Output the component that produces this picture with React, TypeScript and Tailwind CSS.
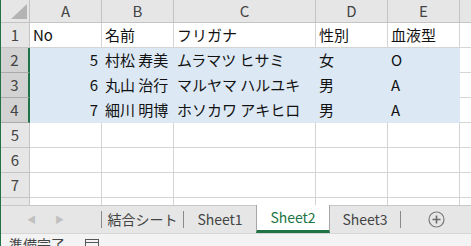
import React from 'react'

const font = { fontFamily: '"Noto Sans CJK JP", "Noto Sans", sans-serif' }

const cols = [
  { key: 'A', w: 'w-[72px]' },
  { key: 'B', w: 'w-[72px]' },
  { key: 'C', w: 'w-[142px]' },
  { key: 'D', w: 'w-[72px]' },
  { key: 'E', w: 'w-[72px]' },
]

const rows: (string | number)[][] = [
  ['No', '名前', 'フリガナ', '性別', '血液型'],
  [5, '村松 寿美', 'ムラマツ ヒサミ', '女', 'O'],
  [6, '丸山 治行', 'マルヤマ ハルユキ', '男', 'A'],
  [7, '細川 明博', 'ホソカワ アキヒロ', '男', 'A'],
  ['', '', '', '', ''],
  ['', '', '', '', ''],
  ['', '', '', '', ''],
  ['', '', '', '', ''],
]

const Cell = ({ value, w, selected }: { value: string | number; w: string; selected: boolean }) => {
  const numeric = typeof value === 'number'
  return (
    <div
      className={`${w} shrink-0 h-full border-r border-b flex items-center overflow-hidden whitespace-nowrap text-[15px] text-[#111] px-[3px] ${
        selected ? 'bg-[#dce8f4] border-[#dce8f4]' : 'bg-white border-[#d4d4d4]'
      } ${numeric ? 'justify-end' : 'justify-start'}`}
    >
      {value}
    </div>
  )
}

export default function App() {
  return (
    <div style={font} className="w-[471px] h-[246px] overflow-hidden bg-white border-l border-[#217346] flex flex-col">
      <div className="h-[205px] shrink-0 overflow-hidden flex flex-col">
        {/* column headers */}
        <div className="flex h-[23px] shrink-0">
          <div className="w-[29px] shrink-0 h-full bg-[#e6e6e6] border-r border-b border-[#c4c4c4] relative overflow-hidden">
            <svg width="29" height="23" className="absolute left-0 top-0">
              <polygon points="10,19 26,19 26,4" fill="#b4b4b4" />
            </svg>
          </div>
          {cols.map((c) => (
            <div
              key={c.key}
              className={`${c.w} shrink-0 h-full bg-[#e6e6e6] border-r border-b border-[#c4c4c4] flex items-center justify-center text-[15px] text-[#444]`}
            >
              {c.key}
            </div>
          ))}
          <div className="flex-1 h-full bg-[#e6e6e6] border-b border-[#c4c4c4]" />
        </div>

        {/* grid rows */}
        {rows.map((r, i) => {
          const sel = i >= 1 && i <= 3
          return (
            <div key={i} className="flex h-[25px] shrink-0">
              <div
                className={`w-[29px] shrink-0 h-full border-b flex items-center justify-center text-[15px] text-[#444] ${
                  sel
                    ? 'bg-[#d2d2d2] border-b-[#ababab] border-r-2 border-r-[#217346]'
                    : 'bg-[#e6e6e6] border-b-[#c4c4c4] border-r border-r-[#c4c4c4]'
                }`}
              >
                {i < 7 ? i + 1 : ''}
              </div>
              {r.map((v, j) => (
                <Cell key={j} value={v} w={cols[j].w} selected={sel} />
              ))}
              <div className="flex-1 h-full bg-white border-b border-[#d4d4d4]" />
            </div>
          )
        })}
      </div>

      {/* sheet tabs */}
      <div className="h-[28px] shrink-0 bg-[#e6e6e6] border-t border-[#c8c8c8] flex items-stretch text-[14px] text-[#444]">
        <div className="w-[100px] shrink-0 flex items-center">
          <span className="ml-[26px] text-[9px] text-[#c0c0c0]">◀</span>
          <span className="ml-[19px] text-[9px] text-[#c0c0c0]">▶</span>
        </div>
        <div className="w-px my-[5px] bg-[#8a8a8a]" />
        <div className="w-[81px] flex items-center justify-center">結合シート</div>
        <div className="w-px my-[5px] bg-[#8a8a8a]" />
        <div className="w-[72px] flex items-center justify-center">Sheet1</div>
        <div className="w-[74px] -mt-px bg-white border-x border-[#a6a6a6] border-b-[3px] border-b-[#217346] flex items-center justify-center text-[#217346]">
          Sheet2
        </div>
        <div className="w-[70px] flex items-center justify-center">Sheet3</div>
        <div className="w-px my-[5px] bg-[#8a8a8a]" />
        <div className="flex-1 flex items-center justify-center">
          <svg width="17" height="17" viewBox="0 0 17 17">
            <circle cx="8.5" cy="8.5" r="7.5" fill="none" stroke="#7a7a7a" strokeWidth="1.2" />
            <path d="M8.5 4.5v8M4.5 8.5h8" stroke="#6a6a6a" strokeWidth="1.6" />
          </svg>
        </div>
      </div>

      {/* status bar */}
      <div className="flex-1 bg-[#f3f3f3] border-t border-[#d6d6d6] overflow-hidden flex items-start text-[14px] text-[#444]">
        <span className="ml-[8px] mt-[3px] leading-none">準備完了</span>
        <svg width="16" height="14" className="ml-[19px] mt-[4px]">
          <rect x="1.5" y="1.5" width="13" height="12" fill="none" stroke="#555" />
          <path d="M1.5 4.5h13" stroke="#555" />
        </svg>
      </div>
    </div>
  )
}
